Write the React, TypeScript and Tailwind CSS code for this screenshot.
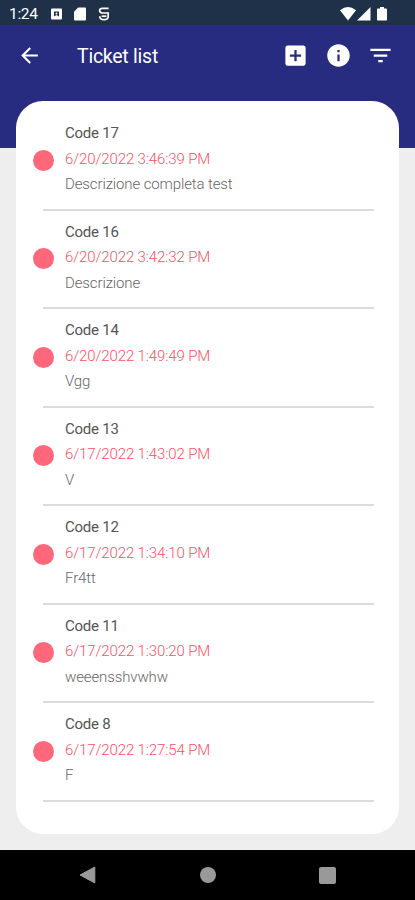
import { MdAddBox, MdArrowBack, MdFilterList, MdInfo } from 'react-icons/md'

interface Ticket {
  code: number
  date: string
  description: string
}

const tickets: Ticket[] = [
  { code: 17, date: '6/20/2022 3:46:39 PM', description: 'Descrizione completa test' },
  { code: 16, date: '6/20/2022 3:42:32 PM', description: 'Descrizione' },
  { code: 14, date: '6/20/2022 1:49:49 PM', description: 'Vgg' },
  { code: 13, date: '6/17/2022 1:43:02 PM', description: 'V' },
  { code: 12, date: '6/17/2022 1:34:10 PM', description: 'Fr4tt' },
  { code: 11, date: '6/17/2022 1:30:20 PM', description: 'weeensshvwhw' },
  { code: 8, date: '6/17/2022 1:27:54 PM', description: 'F' },
]

function StatusBar() {
  return (
    <div className="flex h-[25px] items-center bg-[#1e3148] pt-[2px] pl-[9px] text-white">
      <span className="w-[42px] pt-[2px] text-[15.5px] leading-none tracking-[-0.3px]">1:24</span>
      <svg className="h-3 w-[11px]" viewBox="0 0 11 12">
        <rect x="0" y="0.5" width="11" height="11" rx="1" fill="#fff" />
        <path d="M3 3.5h5v5L5.5 7 3 8.5z" fill="#1e3148" />
        <circle cx="5.5" cy="5.4" r="1" fill="#fff" />
      </svg>
      <svg className="ml-3 h-[14px] w-3" viewBox="0 0 12 14">
        <path d="M4.2 0.5H11q1 0 1 1V12.5q0 1-1 1H1q-1 0-1-1V4.8z" fill="#fff" />
      </svg>
      <svg className="ml-3 h-[14px] w-3" viewBox="0 0 12 14" fill="none" stroke="#fff" strokeWidth="1.7">
        <path d="M10.6 1.4H4.4Q1.6 1.4 1.6 3.6T4.2 6h6v3.2Q10.2 12.7 6 12.7T1.8 9.2" />
        <path d="M3.6 9.2h4.8" />
      </svg>
      <svg className="ml-auto h-[14px] w-4" viewBox="0 0 16 14">
        <path d="M0 3.2Q8-3 16 3.2L8 13.5z" fill="#fff" />
      </svg>
      <svg className="ml-[1px] h-[14px] w-[14px]" viewBox="0 0 14 14">
        <path d="M13.5 0V13.5H0z" fill="#fff" />
      </svg>
      <svg className="mr-[28px] ml-[6px] h-[14px] w-[10px]" viewBox="0 0 10 14">
        <path d="M3 0h4v1.4h2.2q.8 0 .8.8v10.5q0 .8-.8.8H.8q-.8 0-.8-.8V2.2q0-.8.8-.8H3z" fill="#fff" />
      </svg>
    </div>
  )
}

function AppBar() {
  return (
    <header className="flex h-[61px] items-center pl-[17px] text-white">
      <MdArrowBack className="h-[25px] w-[25px]" />
      <h1 className="ml-[35px] pt-[3px] text-[19.5px] tracking-[-0.25px]">Ticket list</h1>
      <div className="mr-[21px] ml-auto flex items-center gap-[15.5px]">
        <MdAddBox className="h-[27px] w-[27px]" />
        <MdInfo className="h-[27px] w-[27px]" />
        <MdFilterList className="h-[27px] w-[27px]" />
      </div>
    </header>
  )
}

function TicketRow({ ticket }: { ticket: Ticket }) {
  return (
    <li className="h-[98.5px]">
      <div className="flex h-[96.5px] pt-[9px] pl-[17px]">
        <span className="mt-[28.5px] h-[21px] w-[21px] rounded-full bg-[#ff677b]" />
        <div className="ml-[11px] text-[15px] leading-[25.5px]">
          <p className="tracking-[-0.25px] text-[#555]">Code {ticket.code}</p>
          <p className="font-light tracking-[-0.12px] text-[#ff5068]">{ticket.date}</p>
          <p className="font-light tracking-[-0.12px] text-[#666]">{ticket.description}</p>
        </div>
      </div>
      <div className="mr-[25px] ml-[27px] h-[2px] bg-[#dcdcdc]" />
    </li>
  )
}

function NavigationBar() {
  return (
    <nav className="flex h-[50px] items-center justify-between bg-black pr-[79px] pl-[79px]">
      <svg className="h-[18px] w-[17px]" viewBox="0 0 17 18">
        <path d="M15.8 1v16L1 9z" fill="#999" stroke="#999" strokeWidth="1" strokeLinejoin="round" />
      </svg>
      <span className="h-4 w-4 rounded-full bg-[#999]" />
      <span className="h-[17px] w-[17px] rounded-[2px] bg-[#999]" />
    </nav>
  )
}

export default function App() {
  return (
    <div className="flex h-[900px] w-[415px] flex-col overflow-hidden bg-[#eee] font-[Roboto,sans-serif]">
      <StatusBar />
      <div className="h-[123px] shrink-0 bg-[#282c80]">
        <AppBar />
      </div>
      <main className="relative mx-4 -mt-[47px] h-[733px] shrink-0 rounded-[27px] bg-white pt-[11px]">
        <ul>
          {tickets.map(t => (
            <TicketRow key={t.code} ticket={t} />
          ))}
        </ul>
      </main>
      <div className="mt-auto">
        <NavigationBar />
      </div>
    </div>
  )
}
